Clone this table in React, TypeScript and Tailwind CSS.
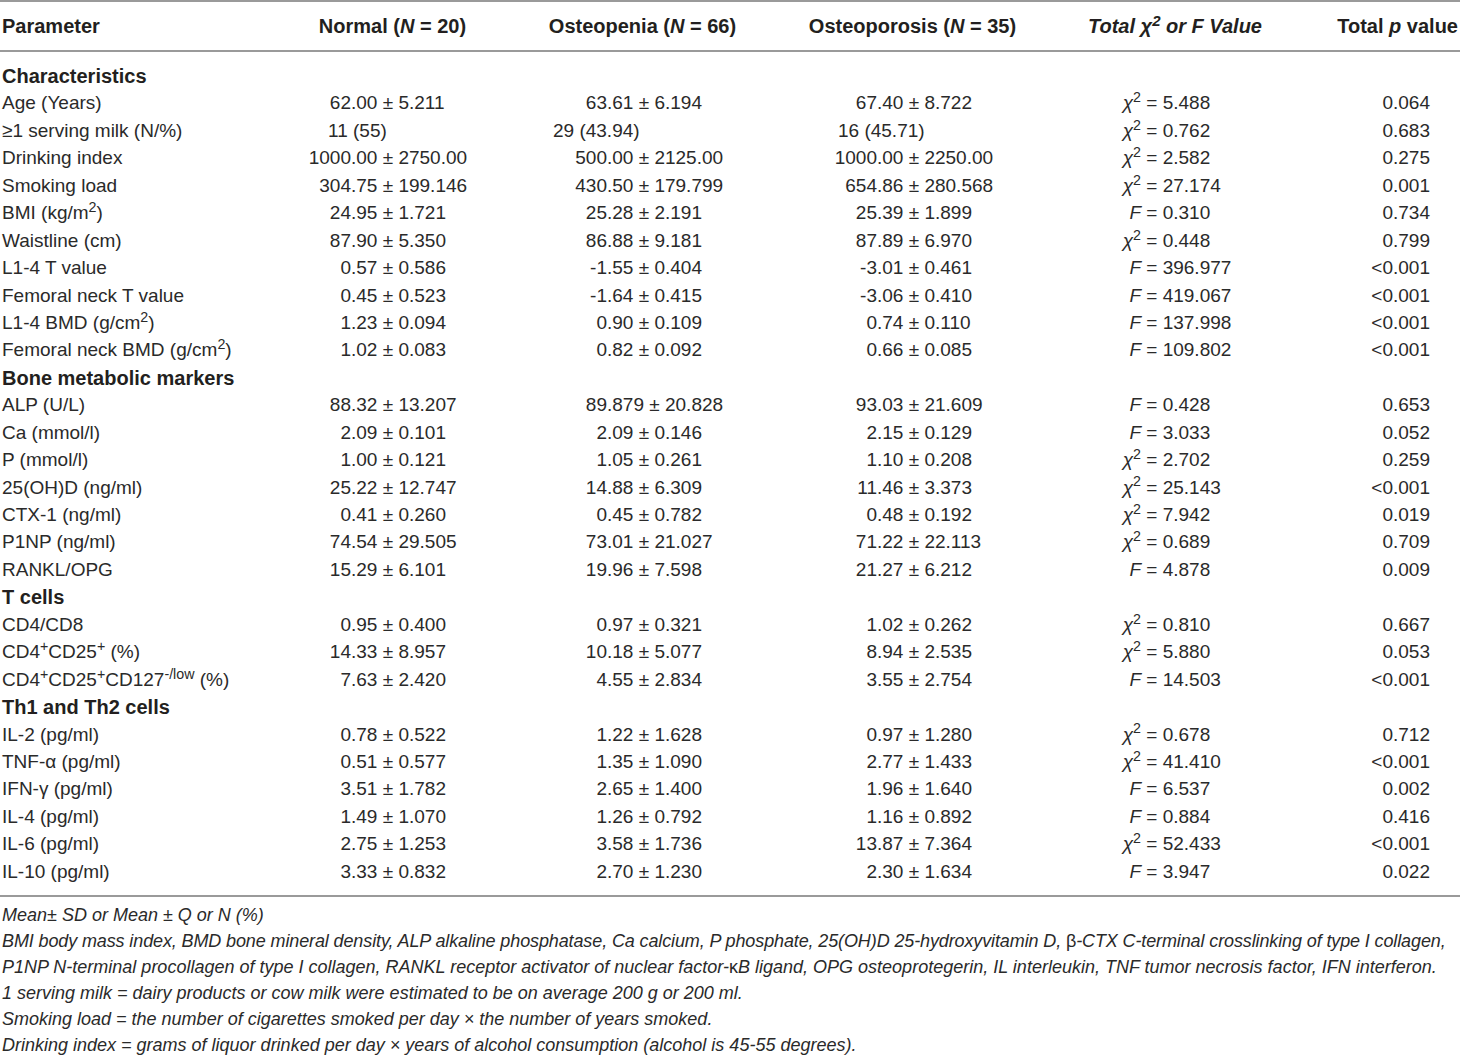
import React from 'react';

type Stat = ['x' | 'F', string];

interface Row {
  label?: React.ReactNode;
  section?: string;
  v?: [string, string, string];
  left?: boolean;
  s?: Stat;
  p?: string;
}

const rows: Row[] = [
  { section: 'Characteristics' },
  { label: 'Age (Years)', v: ['62.00 ± 5.211', '63.61 ± 6.194', '67.40 ± 8.722'], s: ['x', '5.488'], p: '0.064' },
  { label: '≥1 serving milk (N/%)', v: ['11 (55)', '29 (43.94)', '16 (45.71)'], left: true, s: ['x', '0.762'], p: '0.683' },
  { label: 'Drinking index', v: ['1000.00 ± 2750.00', '500.00 ± 2125.00', '1000.00 ± 2250.00'], s: ['x', '2.582'], p: '0.275' },
  { label: 'Smoking load', v: ['304.75 ± 199.146', '430.50 ± 179.799', '654.86 ± 280.568'], s: ['x', '27.174'], p: '0.001' },
  { label: <>BMI (kg/m<sup>2</sup>)</>, v: ['24.95 ± 1.721', '25.28 ± 2.191', '25.39 ± 1.899'], s: ['F', '0.310'], p: '0.734' },
  { label: 'Waistline (cm)', v: ['87.90 ± 5.350', '86.88 ± 9.181', '87.89 ± 6.970'], s: ['x', '0.448'], p: '0.799' },
  { label: 'L1-4 T value', v: ['0.57 ± 0.586', '-1.55 ± 0.404', '-3.01 ± 0.461'], s: ['F', '396.977'], p: '<0.001' },
  { label: 'Femoral neck T value', v: ['0.45 ± 0.523', '-1.64 ± 0.415', '-3.06 ± 0.410'], s: ['F', '419.067'], p: '<0.001' },
  { label: <>L1-4 BMD (g/cm<sup>2</sup>)</>, v: ['1.23 ± 0.094', '0.90 ± 0.109', '0.74 ± 0.110'], s: ['F', '137.998'], p: '<0.001' },
  { label: <>Femoral neck BMD (g/cm<sup>2</sup>)</>, v: ['1.02 ± 0.083', '0.82 ± 0.092', '0.66 ± 0.085'], s: ['F', '109.802'], p: '<0.001' },
  { section: 'Bone metabolic markers' },
  { label: 'ALP (U/L)', v: ['88.32 ± 13.207', '89.879 ± 20.828', '93.03 ± 21.609'], s: ['F', '0.428'], p: '0.653' },
  { label: 'Ca (mmol/l)', v: ['2.09 ± 0.101', '2.09 ± 0.146', '2.15 ± 0.129'], s: ['F', '3.033'], p: '0.052' },
  { label: 'P (mmol/l)', v: ['1.00 ± 0.121', '1.05 ± 0.261', '1.10 ± 0.208'], s: ['x', '2.702'], p: '0.259' },
  { label: '25(OH)D (ng/ml)', v: ['25.22 ± 12.747', '14.88 ± 6.309', '11.46 ± 3.373'], s: ['x', '25.143'], p: '<0.001' },
  { label: 'CTX-1 (ng/ml)', v: ['0.41 ± 0.260', '0.45 ± 0.782', '0.48 ± 0.192'], s: ['x', '7.942'], p: '0.019' },
  { label: 'P1NP (ng/ml)', v: ['74.54 ± 29.505', '73.01 ± 21.027', '71.22 ± 22.113'], s: ['x', '0.689'], p: '0.709' },
  { label: 'RANKL/OPG', v: ['15.29 ± 6.101', '19.96 ± 7.598', '21.27 ± 6.212'], s: ['F', '4.878'], p: '0.009' },
  { section: 'T cells' },
  { label: 'CD4/CD8', v: ['0.95 ± 0.400', '0.97 ± 0.321', '1.02 ± 0.262'], s: ['x', '0.810'], p: '0.667' },
  { label: <>CD4<sup>+</sup>CD25<sup>+</sup> (%)</>, v: ['14.33 ± 8.957', '10.18 ± 5.077', '8.94 ± 2.535'], s: ['x', '5.880'], p: '0.053' },
  { label: <>CD4<sup>+</sup>CD25<sup>+</sup>CD127<sup>-/low</sup> (%)</>, v: ['7.63 ± 2.420', '4.55 ± 2.834', '3.55 ± 2.754'], s: ['F', '14.503'], p: '<0.001' },
  { section: 'Th1 and Th2 cells' },
  { label: 'IL-2 (pg/ml)', v: ['0.78 ± 0.522', '1.22 ± 1.628', '0.97 ± 1.280'], s: ['x', '0.678'], p: '0.712' },
  { label: 'TNF-α (pg/ml)', v: ['0.51 ± 0.577', '1.35 ± 1.090', '2.77 ± 1.433'], s: ['x', '41.410'], p: '<0.001' },
  { label: 'IFN-γ (pg/ml)', v: ['3.51 ± 1.782', '2.65 ± 1.400', '1.96 ± 1.640'], s: ['F', '6.537'], p: '0.002' },
  { label: 'IL-4 (pg/ml)', v: ['1.49 ± 1.070', '1.26 ± 0.792', '1.16 ± 0.892'], s: ['F', '0.884'], p: '0.416' },
  { label: 'IL-6 (pg/ml)', v: ['2.75 ± 1.253', '3.58 ± 1.736', '13.87 ± 7.364'], s: ['x', '52.433'], p: '<0.001' },
  { label: 'IL-10 (pg/ml)', v: ['3.33 ± 0.832', '2.70 ± 1.230', '2.30 ± 1.634'], s: ['F', '3.947'], p: '0.022' },
];

// decimal-aligned padding per group column, and padding for the plain "N (%)" row
const decPad = ['pl-[16px]', 'pl-[37px]', 'pl-[42px]'];
const leftPad = ['pl-[53px]', 'pl-[43px]', 'pl-[63px]'];

const cols = 'grid grid-cols-[275px_235px_265px_275px_250px_160px]';

function Value({ text, idx, left }: { text: string; idx: number; left?: boolean }) {
  if (left) {
    return <div className={`${leftPad[idx]} whitespace-nowrap`}>{text}</div>;
  }
  const dot = text.indexOf('.');
  const head = text.slice(0, dot);
  const rest = text.slice(dot);
  return (
    <div className={`flex ${decPad[idx]} whitespace-nowrap`}>
      <span className="w-[60px] shrink-0 text-right">{head}</span>
      <span>{rest}</span>
    </div>
  );
}

function StatCell({ s }: { s: Stat }) {
  return (
    <div className="flex pl-[51px] whitespace-nowrap">
      <span className="w-[40px] shrink-0 text-right">
        {s[0] === 'x' ? (
          <>
            <i>χ</i>
            <sup>2</sup>
          </>
        ) : (
          <i>F</i>
        )}
      </span>
      <span>&nbsp;= {s[1]}</span>
    </div>
  );
}

export default function App() {
  return (
    <div className="w-[1460px] bg-white text-[#231f20] font-['Liberation_Sans',Arial,sans-serif] text-[19px]">
      {/* header */}
      <div className="border-t-2 border-b-2 border-[#9a9a9a]">
        <div className={`${cols} h-[48px] items-center font-bold text-[20px]`}>
          <div className="pl-[2px]">Parameter</div>
          <div className="text-center whitespace-nowrap">
            Normal (<i>N</i> = 20)
          </div>
          <div className="text-center whitespace-nowrap">
            Osteopenia (<i>N</i> = 66)
          </div>
          <div className="text-center whitespace-nowrap">
            Osteoporosis (<i>N</i> = 35)
          </div>
          <div className="text-center italic whitespace-nowrap">
            Total <span>χ</span>
            <sup>2</sup> or F Value
          </div>
          <div className="text-right pr-[2px] whitespace-nowrap">
            Total <i>p</i> value
          </div>
        </div>
      </div>

      {/* body */}
      <div className="pt-[10px] pb-[10px] border-b-2 border-[#9a9a9a]">
        {rows.map((r, i) =>
          r.section ? (
            <div key={i} className="h-[27.45px] flex items-center pl-[2px] font-bold text-[20px]">
              {r.section}
            </div>
          ) : (
            <div key={i} className={`${cols} h-[27.45px] items-center text-[#2a2a2a]`}>
              <div className="pl-[2px] whitespace-nowrap">{r.label}</div>
              {r.v!.map((t, j) => (
                <Value key={j} text={t} idx={j} left={r.left} />
              ))}
              <StatCell s={r.s!} />
              <div className="text-right pr-[30px]">{r.p}</div>
            </div>
          )
        )}
      </div>

      {/* footnotes */}
      <div className="pt-[5px] pl-[2px] italic text-[18px] leading-[26px] text-[#2a2a2a] font-['Liberation_Sans',sans-serif] whitespace-nowrap">
        <p>Mean± SD or Mean ± Q or N (%)</p>
        <p className="tracking-[-0.12px]">
          BMI body mass index, BMD bone mineral density, ALP alkaline phosphatase, Ca calcium, P phosphate, 25(OH)D
          25-hydroxyvitamin D, <span className="not-italic">β</span>-CTX C-terminal crosslinking of type I collagen,
        </p>
        <p>
          P1NP N-terminal procollagen of type I collagen, RANKL receptor activator of nuclear factor-
          <span className="not-italic">κ</span>B ligand, OPG osteoprotegerin, IL interleukin, TNF tumor necrosis factor,
          IFN interferon.
        </p>
        <p>1 serving milk = dairy products or cow milk were estimated to be on average 200 g or 200 ml.</p>
        <p>Smoking load = the number of cigarettes smoked per day × the number of years smoked.</p>
        <p>Drinking index = grams of liquor drinked per day × years of alcohol consumption (alcohol is 45-55 degrees).</p>
      </div>
    </div>
  );
}
